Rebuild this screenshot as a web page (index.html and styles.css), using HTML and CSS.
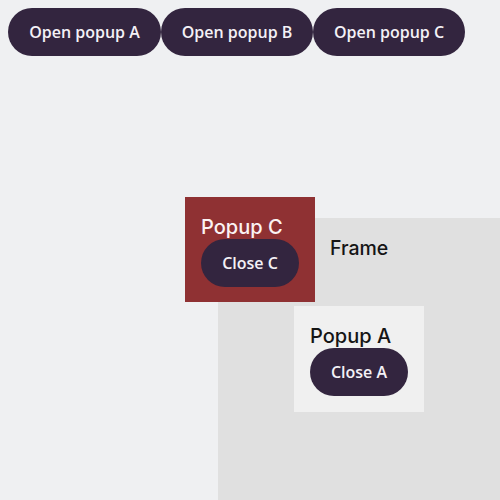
FILE: index.html
```html
<!DOCTYPE html>
<html>
<head>
<meta charset="utf-8">
<link rel="stylesheet" href="styles.css">
</head>
<body>
<div class="toolbar">
  <button class="btn">Open popup A</button>
  <button class="btn">Open popup B</button>
  <button class="btn">Open popup C</button>
</div>
<div class="frame">
  <div class="frame-label">Frame</div>
</div>
<div class="popup popup-c">
  <div class="popup-title">Popup C</div>
  <button class="btn">Close C</button>
</div>
<div class="popup popup-a">
  <div class="popup-title">Popup A</div>
  <button class="btn">Close A</button>
</div>
</body>
</html>
```
FILE: styles.css
```css
html, body {
  margin: 0;
  padding: 0;
  width: 500px;
  height: 500px;
  overflow: hidden;
  background: #eff0f2;
  font-family: "Open Sans", sans-serif;
}
.toolbar {
  display: flex;
  padding: 8px;
}
.btn {
  height: 48px;
  padding: 0 20px;
  border: none;
  border-radius: 24px;
  background: #33253f;
  color: #f4f1f6;
  font-family: "Open Sans", sans-serif;
  font-weight: 600;
  font-size: 16px;
  white-space: nowrap;
}
.toolbar .btn {
  width: 153px;
  padding: 0;
}
.toolbar .btn + .btn {
  width: 152px;
}
.frame {
  position: absolute;
  left: 218px;
  top: 218px;
  width: 300px;
  height: 300px;
  background: #e0e0e0;
}
.frame-label {
  position: absolute;
  left: 112px;
  top: 18px;
  font-family: Inter, sans-serif;
  font-weight: 500;
  font-size: 19.5px;
  color: #151515;
}
.popup {
  position: absolute;
  width: 130px;
  box-sizing: border-box;
  padding: 14px 16px 15px;
}
.popup .btn {
  display: block;
  width: 98px;
  padding: 0;
}
.popup-title {
  font-family: Inter, sans-serif;
  font-weight: 500;
  font-size: 20px;
  line-height: 22px;
  margin: 5px 0 1px;
}
.popup-c {
  left: 185px;
  top: 197px;
  height: 105px;
  background: #8f3133;
  color: #fbf3f3;
}
.popup-a {
  left: 294px;
  top: 306px;
  height: 106px;
  background: #f0f0f0;
  color: #151515;
}
```
